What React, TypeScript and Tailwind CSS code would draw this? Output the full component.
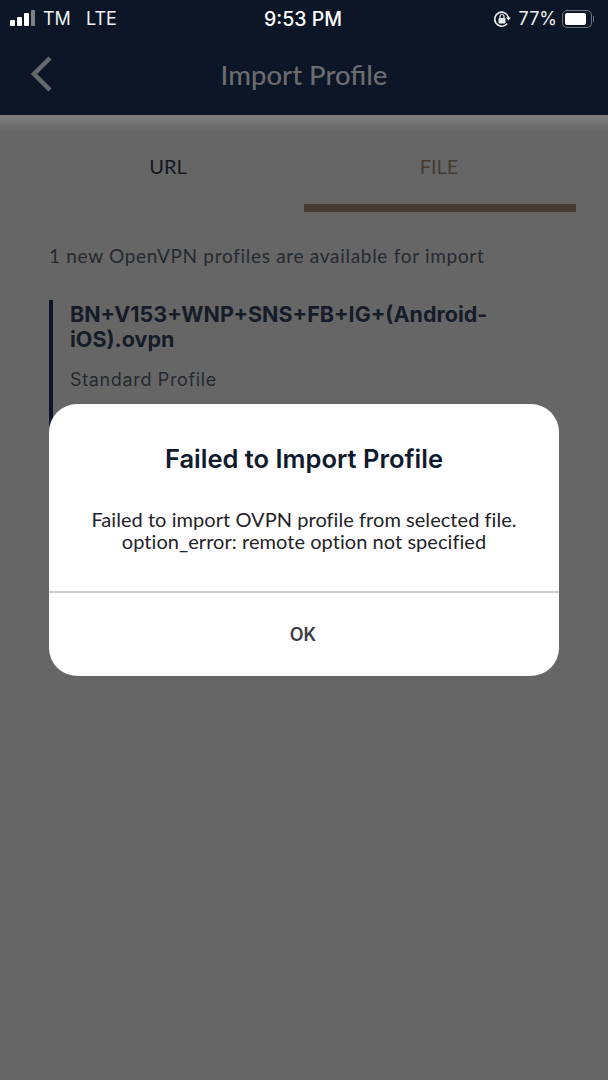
import React from 'react';

const StatusBar: React.FC = () => (
  <div className="h-[36px] flex items-center justify-between pl-[10px] pr-[14px] pt-[1px] relative">
    <div className="flex items-center text-[#eef0f2] text-[18px] font-['Inter',sans-serif]">
      <div className="flex items-end gap-[2px] h-[16px] mr-[8px] mt-[-1px]">
        <div className="w-[5px] h-[6px] rounded-[1px] bg-white" />
        <div className="w-[5px] h-[9px] rounded-[1px] bg-white" />
        <div className="w-[5px] h-[13px] rounded-[1px] bg-white" />
        <div className="w-[4px] h-[16px] rounded-[1px] bg-[#7d828a]" />
      </div>
      <span className="w-[38px]">TM</span>
      <span className="ml-[5px]">LTE</span>
    </div>
    <span className="absolute left-[264px] top-[5px] text-white text-[19.5px] font-medium font-['Inter',sans-serif]">9:53 PM</span>
    <div className="flex items-center text-[#eef0f2] text-[18px] font-['Inter',sans-serif]">
      <svg width="18" height="18" viewBox="0 0 18 18" fill="none" className="mr-[8px]">
        <path d="M15.5 7.5A7 7 0 1 0 13.8 14" stroke="#eef0f2" strokeWidth="1.6" strokeLinecap="round" />
        <path d="M13 7.5h5l-2.5 3z" fill="#eef0f2" />
        <rect x="5.5" y="8" width="7" height="5.5" rx="1" fill="#eef0f2" />
        <path d="M7 8V6.5a2 2 0 0 1 4 0V8" stroke="#eef0f2" strokeWidth="1.2" />
      </svg>
      <span>77%</span>
      <div className="ml-[5px] w-[30px] h-[18px] rounded-[5px] border-[1.5px] border-[#70757d] p-[2px]">
        <div className="w-[21px] h-full rounded-[2px] bg-white" />
      </div>
      <div className="ml-[1px] w-[1px] h-[6px] bg-[#70757d]" />
    </div>
  </div>
);

export default function App() {
  return (
    <div className="relative w-[608px] h-[1080px] overflow-hidden bg-[#666666] font-['Inter',sans-serif]">
      <header className="h-[115px] bg-[#0d1626]">
        <StatusBar />
        <div className="relative h-[79px] flex items-center justify-center pb-[1px]">
          <svg width="24" height="38" viewBox="0 0 24 38" fill="none" className="absolute left-[30px] top-[19px]">
            <path d="M20 3L4 19l16 16" stroke="#66696d" strokeWidth="4.5" />
          </svg>
          <h1 className="text-[#6a6c70] text-[27.5px] font-medium font-['Lato',sans-serif]">Import Profile</h1>
        </div>
      </header>
      <div className="h-[17px] bg-gradient-to-b from-[#7e7e7e] to-[#666666]" />

      <div className="flex h-[80px] px-[32px]">
        <div className="flex-1 flex justify-center pt-[19px] text-[#15181f] text-[20px] font-['Lato',sans-serif]">URL</div>
        <div className="w-[272px] flex flex-col items-center justify-between">
          <span className="pt-[19px] pr-[2px] text-[#473a31] text-[20px] font-['Lato',sans-serif]">FILE</span>
          <div className="w-full h-[8px] bg-[#473a31]" />
        </div>
      </div>

      <p className="mt-[33px] ml-[49px] text-[#252a30] text-[19px] leading-[22px] font-['Lato',sans-serif] tracking-[0.7px] whitespace-nowrap">
        1 new OpenVPN profiles are available for import
      </p>

      <div className="mt-[33px] ml-[49px] mr-[100px] h-[166px] border-l-[4px] border-[#0d1626] pl-[17px] pt-[2px]">
        <p className="text-[#161c28] text-[21.5px] leading-[25px] font-bold w-[440px]">BN+V153+WNP+SNS+FB+IG+(Android-<br />iOS).ovpn</p>
        <p className="mt-[16px] text-[#252a30] text-[18px] leading-[24px] tracking-[0.65px]">Standard Profile</p>
      </div>

      <div className="absolute left-[49px] top-[404px] w-[510px] h-[272px] rounded-[28px] bg-white flex flex-col">
        <h2 className="pt-[39px] text-center text-[#101a2c] text-[25.5px] leading-[32px] font-semibold">Failed to Import Profile</h2>
        <p className="mt-[33px] text-center text-[#1f2328] text-[20px] leading-[22px] tracking-[0.05px] font-['Lato',sans-serif]">
          Failed to import OVPN profile from selected file.<br />option_error: remote option not specified
        </p>
        <div className="mt-[39px] h-[2px] bg-[#cccccc]" />
        <button className="flex-1 text-[#3a3d42] text-[18px] font-semibold pr-[2px]">OK</button>
      </div>
    </div>
  );
}
